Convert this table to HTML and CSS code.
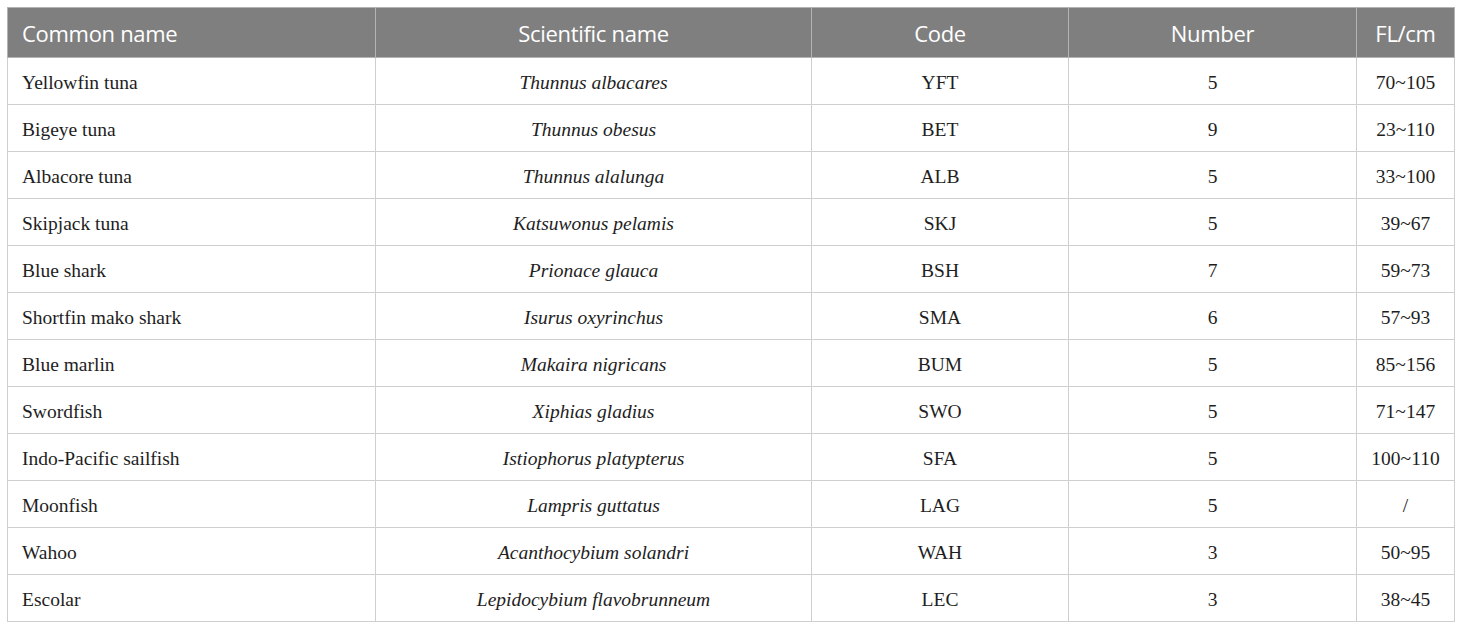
FILE: index.html
```html
<!DOCTYPE html>
<html lang="en">
<head>
<meta charset="utf-8">
<title>Species table</title>
<link rel="stylesheet" href="styles.css">
</head>
<body>
<table class="species">
  <colgroup>
    <col class="c1"><col class="c2"><col class="c3"><col class="c4"><col class="c5">
  </colgroup>
  <thead>
    <tr>
      <th class="left">Common name</th>
      <th>Scientific name</th>
      <th>Code</th>
      <th>Number</th>
      <th>FL/cm</th>
    </tr>
  </thead>
  <tbody>
    <tr><td class="left">Yellowfin tuna</td><td class="sci">Thunnus albacares</td><td>YFT</td><td>5</td><td>70~105</td></tr>
    <tr><td class="left">Bigeye tuna</td><td class="sci">Thunnus obesus</td><td>BET</td><td>9</td><td>23~110</td></tr>
    <tr><td class="left">Albacore tuna</td><td class="sci">Thunnus alalunga</td><td>ALB</td><td>5</td><td>33~100</td></tr>
    <tr><td class="left">Skipjack tuna</td><td class="sci">Katsuwonus pelamis</td><td>SKJ</td><td>5</td><td>39~67</td></tr>
    <tr><td class="left">Blue shark</td><td class="sci">Prionace glauca</td><td>BSH</td><td>7</td><td>59~73</td></tr>
    <tr><td class="left">Shortfin mako shark</td><td class="sci">Isurus oxyrinchus</td><td>SMA</td><td>6</td><td>57~93</td></tr>
    <tr><td class="left">Blue marlin</td><td class="sci">Makaira nigricans</td><td>BUM</td><td>5</td><td>85~156</td></tr>
    <tr><td class="left">Swordfish</td><td class="sci">Xiphias gladius</td><td>SWO</td><td>5</td><td>71~147</td></tr>
    <tr><td class="left">Indo-Pacific sailfish</td><td class="sci">Istiophorus platypterus</td><td>SFA</td><td>5</td><td>100~110</td></tr>
    <tr><td class="left">Moonfish</td><td class="sci">Lampris guttatus</td><td>LAG</td><td>5</td><td>/</td></tr>
    <tr><td class="left">Wahoo</td><td class="sci">Acanthocybium solandri</td><td>WAH</td><td>3</td><td>50~95</td></tr>
    <tr><td class="left">Escolar</td><td class="sci">Lepidocybium flavobrunneum</td><td>LEC</td><td>3</td><td>38~45</td></tr>
  </tbody>
</table>
</body>
</html>
```
FILE: styles.css
```css
html, body {
  margin: 0;
  background: #ffffff;
}
body {
  padding: 7px;
}
.species {
  border-collapse: collapse;
  table-layout: fixed;
  width: 1447px;
  border: 1px solid #c8c8c8;
}
.c1 { width: 368px; }
.c2 { width: 436px; }
.c3 { width: 257px; }
.c4 { width: 288px; }
.c5 { width: 98px; }
.species th {
  background: #7f7f7f;
  color: #ffffff;
  font-family: "Open Sans", "Noto Sans", sans-serif;
  font-weight: 400;
  font-size: 22px;
  letter-spacing: -0.3px;
  height: 50px;
  padding: 0 14px;
  text-align: center;
  border: 1px solid #b4b4b4;
  box-sizing: border-box;
}
.species td {
  font-family: "Liberation Serif", "Times New Roman", serif;
  font-size: 19.5px;
  color: #1e1e1e;
  height: 47px;
  padding: 3px 14px 0;
  text-align: center;
  border: 1px solid #cfcfcf;
  box-sizing: border-box;
}
.species .left {
  text-align: left;
}
.species .sci {
  font-style: italic;
}
```
